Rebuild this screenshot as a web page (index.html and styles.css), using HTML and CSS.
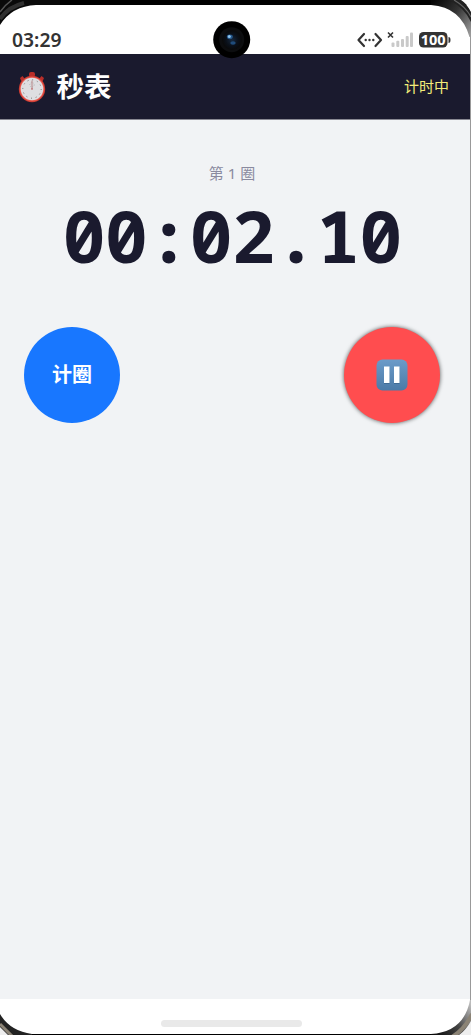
FILE: index.html
```html
<!DOCTYPE html>
<html lang="zh-CN">
<head>
<meta charset="utf-8">
<title>秒表</title>
<link rel="stylesheet" href="styles.css">
</head>
<body>
<div class="phone">
  <div class="status">
    <span class="clock">03:29</span>
    <svg class="status-icons" width="96" height="20" viewBox="0 0 96 20">
      <g fill="none" stroke="#333" stroke-width="2.2" stroke-linecap="round" stroke-linejoin="round">
        <path d="M8 4L2.500 10L8 16M19.500 4L25 10L19.500 16"/>
      </g>
      <g fill="#333"><circle cx="9.700" cy="10" r="1.200"/><circle cx="13.500" cy="10" r="1.200"/><circle cx="17.300" cy="10" r="1.200"/></g>
      <path d="M32 2.500L37 7.500M37 2.500L32 7.500" stroke="#333" stroke-width="1.600"/>
      <g fill="#c9c9c9">
        <rect x="35.500" y="12.500" width="3" height="4.500" rx="1"/><rect x="40.300" y="10.700" width="3" height="6.300" rx="1"/><rect x="45" y="9" width="3" height="8" rx="1"/><rect x="49.700" y="6" width="3" height="11" rx="1"/><rect x="54" y="2.500" width="3" height="14.500" rx="1"/>
      </g>
      <rect x="63" y="2" width="28.500" height="15.500" rx="4.500" fill="#333"/>
      <path d="M92.500 7q2 0 2 3t-2 3z" fill="#333"/>
      <text x="77.200" y="15" class="battery" text-anchor="middle" textLength="25" lengthAdjust="spacingAndGlyphs">100</text>
    </svg>
  </div>
  <header class="header">
    <svg class="watch" width="28" height="32" viewBox="0 0 28 32">
      <g fill="#b92e29"><rect x="11" y="1" width="6" height="5" rx="2"/><rect x="12.500" y="4" width="3" height="4"/><path d="M2 7l2.500-2 2 2.500-3 3zM26 7l-2.500-2-2 2.500 3 3z"/></g>
      <circle cx="14" cy="18" r="13.200" fill="#c93b32"/>
      <circle cx="14" cy="18" r="12.300" fill="#e9564b"/>
      <circle cx="14" cy="18" r="11.300" fill="#dedee1"/>
      <circle cx="14" cy="18" r="9.200" fill="none" stroke="#666" stroke-width="1" stroke-dasharray=".9 3.917"/>
      <circle cx="14" cy="13.800" r="2.200" fill="none" stroke="#aaa" stroke-width=".7" stroke-dasharray="1 1"/>
      <path d="M14 9.500V18" stroke="#a66" stroke-width=".7"/><circle cx="14" cy="18" r=".8" fill="#b55"/>
    </svg>
    <h1 class="title">秒表</h1>
    <span class="state">计时中</span>
  </header>
  <main class="main">
    <div class="lap">第 1 圈</div>
    <div class="time">00:02.10</div>
    <div class="actions">
      <div class="button lap-button"><span class="lap-label">计圈</span></div>
      <div class="button pause-button">
        <svg width="32" height="32" viewBox="0 0 32 32">
          <defs><linearGradient id="tile" x2="0" y2="1"><stop stop-color="#6b9bc9"/><stop offset="1" stop-color="#4b7aa7"/></linearGradient></defs>
          <rect x=".5" y=".5" width="31" height="31" rx="6" fill="url(#tile)"/>
          <path d="M8 8.500h5.500v16.500H8zM18 8.500h5.500v16.500H18z" fill="#416c96"/>
          <path d="M8 7.500h5.500v16.500H8zM18 7.500h5.500v16.500H18z" fill="#fff"/>
        </svg>
      </div>
    </div>
  </main>
  <footer class="nav"><div class="handle"></div></footer>
  <svg class="camera" width="38" height="38" viewBox="0 0 38 38">
    <defs><radialGradient id="lens"><stop stop-color="#16283e"/><stop offset=".6" stop-color="#0a1019"/><stop offset="1" stop-color="#090909"/></radialGradient></defs>
    <circle cx="18.700" cy="18.700" r="18.500" fill="#000"/><circle cx="18.700" cy="18.700" r="12.500" fill="#0c0d0f"/><circle cx="19" cy="19" r="10" fill="url(#lens)"/>
    <ellipse cx="16.800" cy="15.800" rx="3" ry="2.400" fill="#25578a"/><circle cx="16.300" cy="15.500" r="1.500" fill="#8dc5ee"/>
    <ellipse cx="20" cy="22" rx="2.700" ry="1.700" fill="#1f4c7b"/>
  </svg>
  <svg class="frame" width="471" height="1035" viewBox="0 0 471 1035">
    <defs>
      <linearGradient id="rim" gradientUnits="userSpaceOnUse" x1="430" y1="5" x2="470" y2="34"><stop stop-color="#050505"/><stop offset=".5" stop-color="#333"/><stop offset="1" stop-color="#999"/></linearGradient>
      <linearGradient id="base" gradientUnits="userSpaceOnUse" x1="430" y1="1034" x2="470" y2="1004"><stop stop-color="#050505"/><stop offset=".55" stop-color="#444"/><stop offset="1" stop-color="#bbb"/></linearGradient>
    </defs>
    <path d="M0 0H471V5H0z" fill="#000"/>
    <path d="M0 0H60V5H36Q12 6 0 25z" fill="#0a0a0a"/>
    <path d="M0 19Q8 7 24 3" fill="none" stroke="#303030" stroke-width="4"/>
    <path d="M0 12Q5 5 12 0" fill="none" stroke="#555" stroke-width="1.500"/>
    <path d="M431 0H453Q465 7 471 18V37H469.500Q461 7 431 5z" fill="url(#rim)"/>
    <path d="M449 0Q464 7 471 22V12Q467 4 461 0z" fill="#222"/>
    <path d="M454 0Q466 7 471 17" fill="none" stroke="#666" stroke-width="1.200"/>
    <path d="M461 0Q467 4 471 11V0z" fill="#fff"/>
    <path d="M470.500 34V1004" stroke="#999" stroke-width="1"/>
    <path d="M0 1034H471V1035H0z" fill="#000"/>
    <path d="M0 1014Q10 1031 32 1034V1035H0z" fill="#222"/>
    <path d="M0 1024Q7 1031 13 1037" fill="none" stroke="#8b8375" stroke-width="3"/>
    <path d="M0 1027L8 1035H0z" fill="#eee"/>
    <path d="M471 1000H470Q464 1032 431 1034V1035H471z" fill="url(#base)"/>
    <path d="M472 1014Q465 1029 452 1037" fill="none" stroke="#8b8375" stroke-width="4"/>
    <path d="M471 1021Q466 1030 459 1035H471z" fill="#eee"/>
  </svg>
</div>
</body>
</html>
```
FILE: styles.css
```css
body { margin: 0; background: #fff; }
.phone {
  position: relative;
  display: flex;
  flex-direction: column;
  width: 471px;
  height: 1035px;
  overflow: hidden;
  background: #fff;
  font-family: "Noto Sans", "Noto Sans CJK SC", sans-serif;
}
.status {
  display: flex;
  justify-content: space-between;
  align-items: flex-start;
  box-sizing: border-box;
  height: 54px;
  padding: 30px 19px 0 12px;
}
.clock { font-size: 19.3px; line-height: 20px; font-weight: 600; color: #333; }
.status-icons { display: block; }
.battery { font: 700 14.500px "Noto Sans", sans-serif; fill: #fff; }
.header {
  display: flex;
  align-items: center;
  box-sizing: border-box;
  height: 66px;
  padding: 0 22px 0 17.5px;
  background: #1a1a2e;
  border-bottom: 1px solid #888892;
}
.watch { flex: none; }
.title {
  margin: 0 auto 3px 11px;
  font: 700 27.5px/40px "Noto Sans CJK SC", sans-serif;
  color: #fff;
}
.state { margin-bottom: 2px; font: 400 15px/24px "Noto Sans CJK SC", sans-serif; color: #f2ec7a; }
.main {
  display: flex;
  flex-direction: column;
  height: 879px;
  background: #f1f3f5;
}
.lap {
  margin-top: 41px;
  width: 464px;
  text-align: center;
  font-size: 15px;
  line-height: 24px;
  color: #8a8a9f;
}
.time {
  margin-top: 1px;
  width: 464px;
  text-align: center;
  font: 700 72px/98px "Noto Sans Mono", "Noto Sans Mono CJK SC", "DejaVu Sans Mono", monospace;
  letter-spacing: -0.8px;
  color: #1a1a2e;
}
.actions {
  display: flex;
  justify-content: space-between;
  margin-top: 42.5px;
  padding: 0 31px 0 24px;
}
.button {
  display: flex;
  align-items: center;
  justify-content: center;
  width: 96px;
  height: 96px;
  border-radius: 50%;
}
.lap-button {
  background: #1877ff;
  color: #fff;
  font: 700 20px/30px "Noto Sans CJK SC", sans-serif;
}
.lap-label { margin-bottom: 2px; }
.pause-button { background: #ff4d4f; box-shadow: 0 0 4px rgba(0, 0, 0, .65); }
.nav {
  display: flex;
  justify-content: center;
  box-sizing: border-box;
  height: 36px;
  padding: 21px 8px 0 0;
}
.handle { width: 141px; height: 7px; border-radius: 4px; background: #e9e9e9; }
.camera { position: absolute; left: 213px; top: 21px; }
.frame { position: absolute; left: 0; top: 0; }
```
